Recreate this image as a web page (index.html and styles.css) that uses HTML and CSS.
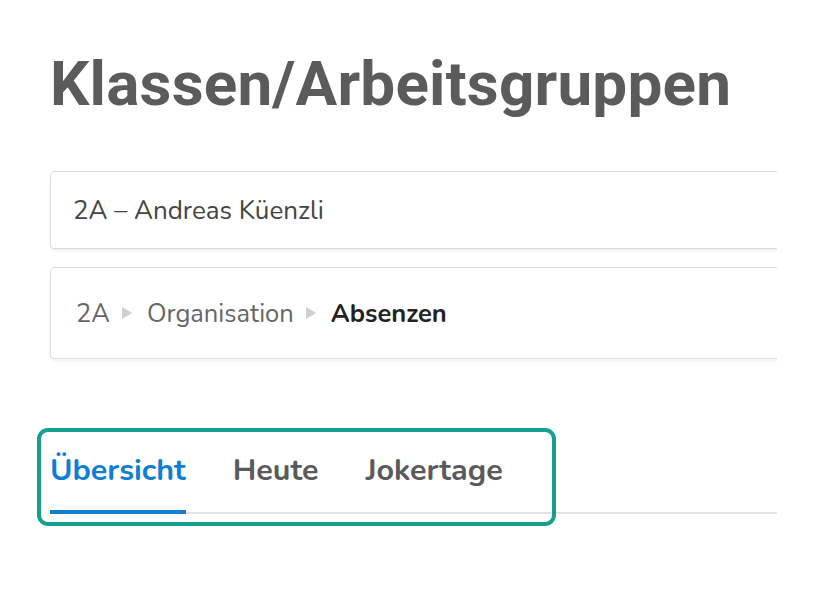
FILE: index.html
```html
<!DOCTYPE html>
<html lang="de">
<head>
<meta charset="utf-8">
<title>Klassen/Arbeitsgruppen</title>
<link rel="stylesheet" href="styles.css">
</head>
<body>
<main class="page">
  <h1 class="title">Klassen/Arbeitsgruppen</h1>
  <div class="card card-select">2A – Andreas Küenzli</div>
  <div class="card card-crumbs">
    <span class="crumb">2A</span>
    <span class="sep"></span>
    <span class="crumb">Organisation</span>
    <span class="sep"></span>
    <span class="crumb current">Absenzen</span>
  </div>
  <nav class="tabs">
    <a class="tab active">Übersicht</a>
    <a class="tab">Heute</a>
    <a class="tab">Jokertage</a>
    <span class="highlight"></span>
  </nav>
</main>
</body>
</html>
```
FILE: styles.css
```css
html, body {
  margin: 0;
  padding: 0;
  background: #fff;
}
body {
  font-family: "Nunito", "Lato", "Noto Sans", sans-serif;
  color: #444;
}
.page {
  width: 727px;
  padding: 44px 0 0 50px;
  overflow: hidden;
  position: relative;
  height: 548px;
}
.title {
  margin: 0 0 47px 0;
  font-family: "Roboto", "Noto Sans", sans-serif;
  font-weight: 700;
  font-size: 62px;
  line-height: 80px;
  letter-spacing: 0.2px;
  color: #5b5b5b;
  white-space: nowrap;
}
.card {
  width: 900px;
  box-sizing: border-box;
  border: 1px solid #dcdcdc;
  border-radius: 4px;
  box-shadow: 0 2px 3px rgba(0,0,0,0.06);
  background: #fff;
  display: flex;
  align-items: center;
  font-size: 26px;
}
.card-select {
  height: 78px;
  padding-left: 22px;
  color: #444;
  margin-bottom: 18px;
}
.card-crumbs {
  height: 92px;
  padding-left: 25px;
  font-size: 25.5px;
  color: #666;
}
.crumb.current {
  font-weight: 700;
  color: #222;
}
.sep {
  width: 0;
  height: 0;
  margin: 0 15px 0 12px;
  border-left: 10px solid #cfcfcf;
  border-top: 6px solid transparent;
  border-bottom: 6px solid transparent;
}
.tabs {
  position: relative;
  margin-top: 84px;
  display: flex;
  gap: 47px;
  border-bottom: 2px solid #e2e2e2;
  width: 727px;
}
.tab {
  font-size: 30.5px;
  font-weight: 700;
  line-height: 36px;
  color: #5a5a5a;
  padding: 9px 0 24px;
  cursor: pointer;
}
.tab.active {
  color: #0b7fd6;
  box-shadow: inset 0 -4px 0 #0b7fd6;
  margin-bottom: -2px;
  padding-bottom: 26px;
}
.highlight {
  position: absolute;
  left: -13px;
  top: -15px;
  width: 511px;
  height: 90px;
  border: 4px solid #13a08c;
  border-radius: 11px;
  pointer-events: none;
}
```
